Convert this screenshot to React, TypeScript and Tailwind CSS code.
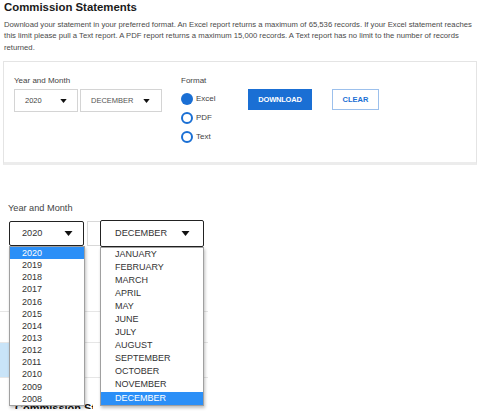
import React from "react";

const Arrow = ({ w = 8, h = 5 }: { w?: number; h?: number }) => (
  <svg width={w} height={h} viewBox="0 0 8 5" className="block">
    <polygon points="0,0 8,0 4,5" fill="#111" />
  </svg>
);

const Radio = ({ on, label }: { on?: boolean; label: string }) => (
  <div className="flex items-center h-[19px]">
    {on ? (
      <span className="w-[12px] h-[12px] rounded-full bg-[#1a6fd4]" />
    ) : (
      <span className="w-[12px] h-[12px] rounded-full border-[2px] border-[#1a6fd4] bg-white" />
    )}
    <span className="ml-[3px] text-[8px] text-[#444]">{label}</span>
  </div>
);

const years = ["2020", "2019", "2018", "2017", "2016", "2015", "2014", "2013", "2012", "2011", "2010", "2009", "2008"];
const months = [
  "JANUARY",
  "FEBRUARY",
  "MARCH",
  "APRIL",
  "MAY",
  "JUNE",
  "JULY",
  "AUGUST",
  "SEPTEMBER",
  "OCTOBER",
  "NOVEMBER",
  "DECEMBER",
];

export default function App() {
  return (
    <div
      className="relative w-[480px] h-[417px] overflow-hidden bg-white text-[#333]"
      style={{ fontFamily: '"Liberation Sans", Arial, sans-serif' }}
    >
      <div className="h-[61px] pl-[4px] pt-[1px]">
        <h1 className="text-[11.4px] font-bold text-[#1a1a1a] leading-[13px]">Commission Statements</h1>
        <p className="mt-[5px] whitespace-nowrap text-[7.7px] leading-[11.3px] text-[#4a4a4a]">
          Download your statement in your preferred format. An Excel report returns a maximum of 65,536 records. If your
          Excel statement reaches
          <br />
          this limit please pull a Text report. A PDF report returns a maximum 15,000 records. A Text report has no limit
          to the number of records
          <br />
          returned.
        </p>
      </div>

      <div className="mx-[3px] h-[104px] border border-[#e4e4e4] border-b-[3px] border-b-[#ececec] flex pl-[10px] pt-[14px]">
        <div className="w-[167px]">
          <div className="text-[8px] leading-[10px] text-[#444]">Year and Month</div>
          <div className="mt-[3px] flex gap-[2px]">
            <div className="w-[64px] h-[23px] border border-[#d4d4d4] flex items-center pl-[10px] pr-[10px] justify-between">
              <span className="text-[7.5px] text-[#444]">2020</span>
              <Arrow w={7} h={4} />
            </div>
            <div className="w-[82px] h-[23px] border border-[#d4d4d4] flex items-center pl-[10px] pr-[11px] justify-between">
              <span className="text-[7.5px] text-[#555]">DECEMBER</span>
              <Arrow w={7} h={4} />
            </div>
          </div>
        </div>
        <div className="w-[67px]">
          <div className="text-[8px] leading-[10px] text-[#444]">Format</div>
          <div className="mt-[3px]">
            <Radio on label="Excel" />
            <Radio label="PDF" />
            <Radio label="Text" />
          </div>
        </div>
        <div className="pt-[13px] flex gap-[20px] items-start">
          <div className="w-[64px] h-[21px] bg-[#1a6fd4] flex items-center justify-center text-white text-[7.5px] font-bold tracking-[-0.2px]">
            DOWNLOAD
          </div>
          <div className="w-[47px] h-[21px] border border-[#9cc0ec] flex items-center justify-center text-[#1a6fd4] text-[7.5px] font-bold">
            CLEAR
          </div>
        </div>
      </div>

      {/* Second section (underlying page) */}
      <div className="relative mt-[37px] px-[8px]">
        <div className="text-[9.2px] leading-[12px] text-[#444]">Year and Month</div>
        <div className="mt-[7px] flex gap-[3px] pl-[1px]">
          <div className="w-[75px] h-[25px] border border-[#222] rounded-[2px] flex items-center pl-[12px] pr-[10px] justify-between">
            <span className="text-[9.2px] text-[#333]">2020</span>
            <Arrow w={9} h={5} />
          </div>
          <div className="w-[110px] h-[25px] border border-[#d8d8d8]" />
        </div>
      </div>

      {/* Underlying content below */}
      <div className="absolute left-0 top-[311px] w-[208px] border-t border-[#e6e6e6]" />
      <div className="absolute left-0 top-[342px] w-[208px] h-[36px] border-t border-b border-[#e6e6e6]">
        <div className="w-[85px] h-full bg-[#c9e4f8]" />
      </div>
      <div className="absolute left-[15px] top-[402px] h-[7px] w-[78px] overflow-hidden whitespace-nowrap text-[11px] leading-[13px] font-bold text-[#111]">
        Commission Statements
      </div>

      {/* Year list */}
      <div className="absolute left-[9px] top-[246px] w-[76px] bg-white border border-[#a0a0a0] shadow-[1px_2px_3px_rgba(0,0,0,0.25)]">
        {years.map((y, i) => (
          <div
            key={y}
            className={
              i === 0
                ? "h-[12.15px] bg-[#2b8ff7] text-white text-[9px] leading-[12px] pl-[12px]"
                : "h-[12.15px] text-[#333] text-[9px] leading-[12px] pl-[12px]"
            }
          >
            {y}
          </div>
        ))}
      </div>

      {/* Month select (open) */}
      <div className="absolute left-[100px] top-[220px] w-[104px]">
        <div className="h-[27px] bg-white border border-[#222] rounded-[2px] flex items-center pl-[14px] pr-[13px] justify-between">
          <span className="text-[9.2px] text-[#333]">DECEMBER</span>
          <Arrow w={9} h={5} />
        </div>
        <div className="bg-white border border-[#a0a0a0] shadow-[1px_2px_3px_rgba(0,0,0,0.25)]">
          {months.map((m, i) => (
            <div
              key={m}
              className={
                i === 11
                  ? "h-[13.05px] bg-[#2b8ff7] text-white text-[9px] leading-[13px] pl-[14px]"
                  : "h-[13.05px] text-[#333] text-[9px] leading-[13px] pl-[14px]"
              }
            >
              {m}
            </div>
          ))}
        </div>
      </div>
    </div>
  );
}
